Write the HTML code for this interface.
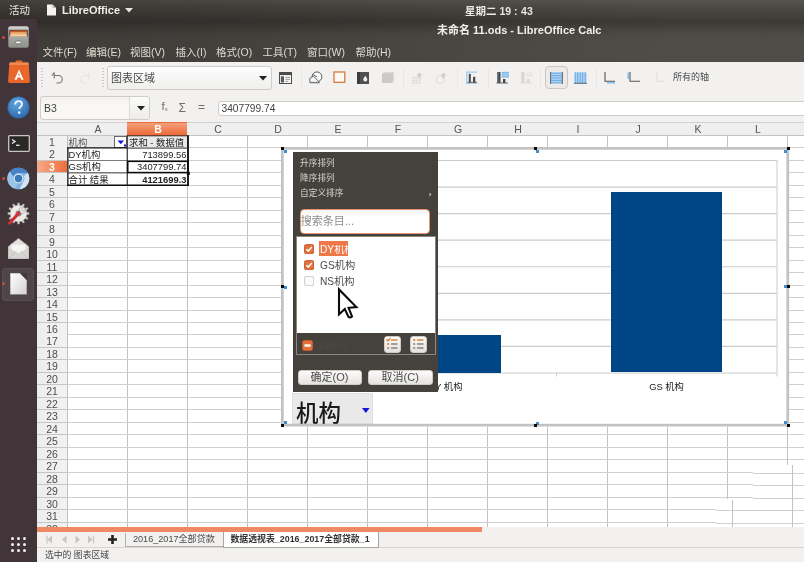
<!DOCTYPE html><html><head><meta charset="utf-8"><title>LibreOffice Calc</title><style>
*{box-sizing:border-box;margin:0;padding:0}
html,body{width:804px;height:562px;overflow:hidden;background:#fff}
body{position:relative;font-family:"Liberation Sans","Noto Sans CJK SC",sans-serif;font-size:10px;color:#333}
#w{position:absolute;left:0;top:0;width:804px;height:562px;overflow:hidden;filter:blur(0.45px)}
.abs{position:absolute}
.t{position:absolute;white-space:nowrap;line-height:1}
#topbar{left:0;top:0;width:804px;height:62px;background:linear-gradient(90deg,rgba(0,0,0,.22) 0,rgba(0,0,0,.17) 25%,rgba(0,0,0,.08) 55%,rgba(0,0,0,0) 85%),linear-gradient(#58544f 0,#4c4843 8px,#433f3b 16px,#3c3834 22px,#45423d 28px,#4e4b46 35px,#504d48 42px,#504d48 62px)}
#dock{left:0;top:19px;width:37px;height:543px;background:#42353a}
#title{display:none}
#menubar{display:none}
#toolbar{left:37px;top:62px;width:767px;height:32px;background:#f2f1f0}
#fbar{left:37px;top:94px;width:767px;height:29px;background:#f2f1f0}
.menu{color:#dfdbd2;font-size:10.5px;top:47px}
.sep{position:absolute;width:1px;background:#eae8e5;top:68px;height:20px}
#sheet{left:37px;top:122px;width:767px;height:405px;background:#fff;overflow:hidden}
.ch{position:absolute;top:0;height:14px;border-top:1px solid #d2d2d2;background:#efefef;border-right:1px solid #c4c4c4;border-bottom:1px solid #c4c4c4;text-align:center;font-size:10.5px;line-height:12px;color:#555;padding-left:2px}
.rh{position:absolute;left:0;width:31px;height:12.5px;background:linear-gradient(90deg,#eeeded,#f3f2f2);border-right:1px solid #c0c0c0;border-bottom:1px solid #c6c6c6;text-align:center;font-size:10.5px;line-height:12.5px;color:#4e4e4e}
.vl{position:absolute;top:13px;width:1px;height:392px;background:#c2c2c2}
.hl{position:absolute;left:30px;height:1px;width:737px;background:#d0d0d0}
.cell{position:absolute;font-size:9.4px;line-height:12px;white-space:nowrap;color:#222;height:12.5px}
</style></head><body><div id="w">
<div id="topbar" class="abs"></div>
<div id="title" class="abs"></div>
<div id="menubar" class="abs"></div>
<div id="dock" class="abs"></div>
<div class="t" style="left:9px;top:5px;font-size:10.5px;color:#e8e6e2">活动</div>
<svg class="abs" style="left:46px;top:4px" width="11" height="12" viewBox="0 0 11 12"><path d="M1 0.5h5.5l3.5 3.5v7.5h-9z" fill="#f4f3f1"/><path d="M6.5 0.5v3.5h3.5z" fill="#bdbbb7"/></svg>
<div class="t" style="left:62px;top:4.5px;font-size:11px;font-weight:bold;color:#eeece8">LibreOffice</div>
<svg class="abs" style="left:125px;top:8px" width="8" height="5"><path d="M0 0h8l-4 4.5z" fill="#e8e6e2"/></svg>
<div class="t" style="left:465px;top:5.5px;font-size:10.5px;color:#e8e6e2;font-weight:bold">星期二 19<span style="margin:0 3.500px 0 3px">:</span>43</div>
<div class="t" style="left:437px;top:25px;font-size:11px;font-weight:bold;color:#f0eeea">未命名 11.ods - LibreOffice Calc</div>
<div class="t menu" style="left:42.5px">文件(F)</div>
<div class="t menu" style="left:86px">编辑(E)</div>
<div class="t menu" style="left:130px">视图(V)</div>
<div class="t menu" style="left:175.5px">插入(I)</div>
<div class="t menu" style="left:216px">格式(O)</div>
<div class="t menu" style="left:262.5px">工具(T)</div>
<div class="t menu" style="left:307px">窗口(W)</div>
<div class="t menu" style="left:355.5px">帮助(H)</div>
<div id="toolbar" class="abs"></div><div id="fbar" class="abs"></div>
<div class="abs" style="left:41px;top:68px;width:2px;height:20px;background:repeating-linear-gradient(#c9c7c3 0 1px,transparent 1px 3px)"></div>
<div class="abs" style="left:102px;top:68px;width:2px;height:20px;background:repeating-linear-gradient(#c9c7c3 0 1px,transparent 1px 3px)"></div>
<svg class="abs" style="left:51px;top:70px" width="14" height="15" viewBox="0 0 14 15"><path d="M3 5.5h4.5a3.6 3.6 0 0 1 0 7.5h-2" fill="none" stroke="#74726e" stroke-width="1.1"/><path d="M3.2 2.5v6M0.8 5.5l2.4-3" fill="none" stroke="#74726e" stroke-width="1.1"/></svg>
<svg class="abs" style="left:78px;top:70px" width="14" height="15" viewBox="0 0 14 15"><path d="M11 5.5h-4.5a3.6 3.6 0 0 0 0 7.5h2M10.8 2.5v6" fill="none" stroke="#e6e4e1" stroke-width="1.1"/></svg>
<div class="abs" style="left:107px;top:66px;width:165px;height:24px;border:1px solid #cfcdc9;border-radius:3px;background:linear-gradient(#fdfdfd,#efeeec)"></div>
<div class="t" style="left:111px;top:73px;font-size:11px;color:#4a4a4a">图表区域</div>
<svg class="abs" style="left:259px;top:76px" width="8" height="5"><path d="M0 0h8l-4 4.5z" fill="#222"/></svg>
<div class="sep" style="left:300.5px"></div>
<div class="sep" style="left:403px"></div>
<div class="sep" style="left:457px"></div>
<div class="sep" style="left:487.5px"></div>
<div class="sep" style="left:539.5px"></div>
<div class="sep" style="left:595.5px"></div>
<svg class="abs" style="left:278.5px;top:71.5px" width="13" height="12" viewBox="0 0 13 12"><rect x="0.500" y="0.500" width="12" height="11" fill="#fbfbfb" stroke="#4c4c4c"/><rect x="0.500" y="0.500" width="12" height="2.600" fill="#4c4c4c"/><rect x="1.800" y="4.300" width="3.200" height="6.200" fill="#5a5a5a"/><path d="M6.300 5.300h4.700M6.300 7.300h4.700M6.300 9.300h3" stroke="#8a8a8a" stroke-width="0.900"/></svg>
<svg class="abs" style="left:308.5px;top:71.3px" width="14" height="13" viewBox="0 0 14 13"><circle cx="8" cy="5.800" r="4.900" fill="#fafafa" stroke="#5c5c5c" stroke-width="1"/><path d="M8 5.800L3.600 3.400" stroke="#5c5c5c" stroke-width="0.900"/><path d="M0.800 7.200l3.800-2 5.800 6.200h-9.600z" fill="#f6f6f6" stroke="#5c5c5c" stroke-width="0.900"/><path d="M1 11.800h9.500" stroke="#777" stroke-width="0.900"/></svg>
<svg class="abs" style="left:333px;top:71px" width="13" height="12.5" viewBox="0 0 13 12.5"><rect x="1" y="1" width="10.800" height="10.300" fill="#fdf8f4" stroke="#d47a3c" stroke-width="1.300"/></svg>
<svg class="abs" style="left:357.3px;top:71.5px" width="12" height="12" viewBox="0 0 12 12"><rect x="0" y="0" width="12" height="12" fill="#505050"/><rect x="0" y="0" width="3" height="12" fill="#3c3c3c"/><path d="M8.300 3.800c1.300 1.800 2 2.700 2 3.800a2 2 0 0 1-4 0c0-1.100 0.700-2 2-3.800z" fill="#f4f4f4"/></svg>
<svg class="abs" style="left:382px;top:72px" width="12" height="11" viewBox="0 0 12 11"><rect x="1.500" y="0" width="10.500" height="9.500" rx="1" fill="#d9d8d6"/><rect x="0" y="1.200" width="10.800" height="9.800" rx="1" fill="#cbcac8"/></svg>
<svg class="abs" style="left:410.5px;top:71px" width="13" height="13" viewBox="0 0 13 13"><path d="M1.500 6.500h7.500v5.500h-7.500zM5.200 6.500v5.500M1.500 9.200h7.500" fill="none" stroke="#dddbd8"/><path d="M8.500 1.500l3 3.200h-2v2.500h-2v-2.500h-2z" fill="#cfcdca"/></svg>
<svg class="abs" style="left:434.5px;top:71px" width="13" height="13" viewBox="0 0 13 13"><path d="M1.500 6.500l3.800-2 3.800 2v4.500l-3.800 2-3.800-2z" fill="none" stroke="#e0deda"/><path d="M8.500 1.500l3 3.200h-2v2.500h-2v-2.500h-2z" fill="#d0cecb"/></svg>
<svg class="abs" style="left:464.5px;top:71px" width="14" height="14" viewBox="0 0 14 14"><path d="M1 1.200h11M1 12.300h11" stroke="#a4cdf0" stroke-width="1.300"/><path d="M1.800 1v11" stroke="#a4cdf0" stroke-width="1.500"/><rect x="3.800" y="2.800" width="2" height="8.800" fill="#4a4a4a"/><rect x="8" y="5.800" width="2.300" height="5.800" fill="#4a4a4a"/><path d="M2.500 11.300h9.500" stroke="#555" stroke-width="0.900"/></svg>
<svg class="abs" style="left:495.5px;top:71px" width="14" height="13" viewBox="0 0 14 13"><rect x="1.300" y="1" width="3.200" height="11" fill="#454545"/><rect x="1.300" y="1" width="1.300" height="11" fill="#6a7680"/><rect x="7" y="8" width="2.400" height="4" fill="#454545"/><path d="M0.500 12h11.500" stroke="#555" stroke-width="0.900"/><rect x="6.300" y="1.300" width="6" height="4.800" fill="#9ccbf0" stroke="#78b4ea" stroke-width="0.900"/></svg>
<svg class="abs" style="left:520px;top:71px" width="13" height="13" viewBox="0 0 13 13"><rect x="1.300" y="1" width="3.200" height="11" fill="#d8d7d4"/><rect x="7" y="8" width="2.400" height="4" fill="#d8d7d4"/><path d="M0.500 12h11.500" stroke="#dcdbd8"/><rect x="6.300" y="1.300" width="6" height="4.800" fill="#e9e8e6"/></svg>
<div class="abs" style="left:544.500px;top:65.500px;width:23px;height:23px;border:1px solid #cbc8c3;border-radius:4px;background:#edebe8"></div>
<svg class="abs" style="left:549.5px;top:71.5px" width="13" height="12" viewBox="0 0 13 12"><rect x="0.500" y="0.300" width="12" height="11.200" fill="#aed3f3"/><path d="M0.500 1.200h12M0.500 3.600h12M0.500 6h12M0.500 8.400h12M0.500 10.800h12" stroke="#62a4e4" stroke-width="0.900"/><path d="M0.600 0v12M12.400 0v12" stroke="#5a5a5a" stroke-width="0.900"/></svg>
<svg class="abs" style="left:574px;top:71.5px" width="13" height="12" viewBox="0 0 13 12"><rect x="0.500" y="0.300" width="12" height="11" fill="#aed3f3"/><path d="M1.200 0.300v11M3.700 0.300v11M6.200 0.300v11M8.700 0.300v11M11.200 0.300v11" stroke="#62a4e4" stroke-width="0.900"/><path d="M0 11.300h13" stroke="#5a5a5a" stroke-width="0.900"/></svg>
<svg class="abs" style="left:604px;top:71.5px" width="12" height="12" viewBox="0 0 12 12"><path d="M1 0v9.300h10" fill="none" stroke="#555" stroke-width="1.100"/><path d="M3 10.800h8" stroke="#86bdee" stroke-width="1.500"/></svg>
<svg class="abs" style="left:627px;top:71.5px" width="13" height="12" viewBox="0 0 13 12"><path d="M3 0v9.300h10" fill="none" stroke="#555" stroke-width="1.100"/><path d="M1.300 0.500v6.500" stroke="#86bdee" stroke-width="1.700"/></svg>
<svg class="abs" style="left:654px;top:71.5px" width="11" height="12" viewBox="0 0 11 12"><path d="M3 0v9.300h8" fill="none" stroke="#e0deda" stroke-width="1.100"/></svg>
<div class="t" style="left:673px;top:72.500px;font-size:9px;color:#4a4a4a">所有的轴</div>
<div class="abs" style="left:39.5px;top:96px;width:110px;height:24px;border:1px solid #cfcdc9;border-radius:3px;background:linear-gradient(#f1f0ee,#f9f8f7 40%)"></div>
<div class="abs" style="left:129px;top:97px;width:20px;height:22px;border-left:1px solid #dcdad7;border-radius:0 3px 3px 0;background:linear-gradient(#fbfbfa,#eeedeb)"></div>
<div class="t" style="left:44px;top:103px;font-size:10.500px;color:#444">B3</div>
<svg class="abs" style="left:136.5px;top:106px" width="8" height="5"><path d="M0 0h8l-4 4.500z" fill="#222"/></svg>
<div class="t" style="left:161.500px;top:101px;font-size:11.5px;color:#6e6e6e">f<span style="font-size:6px;vertical-align:-1px">x</span></div>
<div class="t" style="left:178.500px;top:101.500px;font-size:12px;color:#6e6e6e">Σ</div>
<div class="t" style="left:198px;top:101px;font-size:12px;color:#6e6e6e">=</div>
<div class="abs" style="left:218px;top:100.500px;width:590px;height:15px;border:1px solid #cfcdc9;border-radius:3px 0 0 3px;background:#fff"></div>
<div class="t" style="left:221.500px;top:103.500px;font-size:10.200px;color:#444">3407799.74</div>
<div id="sheet" class="abs">
<div class="ch" style="left:0;width:31px"></div>
<div class="ch" style="left:30.0px;width:61px">A</div>
<div class="ch" style="left:90.0px;width:61px;background:linear-gradient(#f4a07b,#ec6a37);color:#fff;font-weight:bold;border-color:#ec6a37">B</div>
<div class="ch" style="left:150.0px;width:61px">C</div>
<div class="ch" style="left:210.0px;width:61px">D</div>
<div class="ch" style="left:270.0px;width:61px">E</div>
<div class="ch" style="left:330.0px;width:61px">F</div>
<div class="ch" style="left:390.0px;width:61px">G</div>
<div class="ch" style="left:450.0px;width:61px">H</div>
<div class="ch" style="left:510.0px;width:61px">I</div>
<div class="ch" style="left:570.0px;width:61px">J</div>
<div class="ch" style="left:630.0px;width:61px">K</div>
<div class="ch" style="left:690.0px;width:61px">L</div>
<div class="ch" style="left:750.0px;width:61px">M</div>
<div class="rh" style="top:14.00px">1</div>
<div class="rh" style="top:26.47px">2</div>
<div class="rh" style="top:38.94px;background:linear-gradient(90deg,#f6aa86,#ee6e3c);color:#fff;font-weight:bold">3</div>
<div class="rh" style="top:51.40px">4</div>
<div class="rh" style="top:63.87px">5</div>
<div class="rh" style="top:76.34px">6</div>
<div class="rh" style="top:88.81px">7</div>
<div class="rh" style="top:101.28px">8</div>
<div class="rh" style="top:113.74px">9</div>
<div class="rh" style="top:126.21px">10</div>
<div class="rh" style="top:138.68px">11</div>
<div class="rh" style="top:151.15px">12</div>
<div class="rh" style="top:163.62px">13</div>
<div class="rh" style="top:176.08px">14</div>
<div class="rh" style="top:188.55px">15</div>
<div class="rh" style="top:201.02px">16</div>
<div class="rh" style="top:213.49px">17</div>
<div class="rh" style="top:225.96px">18</div>
<div class="rh" style="top:238.42px">19</div>
<div class="rh" style="top:250.89px">20</div>
<div class="rh" style="top:263.36px">21</div>
<div class="rh" style="top:275.83px">22</div>
<div class="rh" style="top:288.30px">23</div>
<div class="rh" style="top:300.76px">24</div>
<div class="rh" style="top:313.23px">25</div>
<div class="rh" style="top:325.70px">26</div>
<div class="rh" style="top:338.17px">27</div>
<div class="rh" style="top:350.64px">28</div>
<div class="rh" style="top:363.10px">29</div>
<div class="rh" style="top:375.57px">30</div>
<div class="rh" style="top:388.04px">31</div>
<div class="rh" style="top:400.51px">32</div>
<div class="rh" style="top:412.98px">33</div>
<div class="vl" style="left:90px"></div>
<div class="vl" style="left:150px"></div>
<div class="vl" style="left:210px"></div>
<div class="vl" style="left:270px"></div>
<div class="vl" style="left:330px"></div>
<div class="vl" style="left:390px"></div>
<div class="vl" style="left:450px"></div>
<div class="vl" style="left:510px"></div>
<div class="vl" style="left:570px"></div>
<div class="vl" style="left:630px"></div>
<div class="vl" style="left:690px"></div>
<div class="vl" style="left:750px"></div>
<div class="hl" style="top:25.47px"></div>
<div class="hl" style="top:37.94px"></div>
<div class="hl" style="top:50.40px"></div>
<div class="hl" style="top:62.87px"></div>
<div class="hl" style="top:75.34px"></div>
<div class="hl" style="top:87.81px"></div>
<div class="hl" style="top:100.28px"></div>
<div class="hl" style="top:112.74px"></div>
<div class="hl" style="top:125.21px"></div>
<div class="hl" style="top:137.68px"></div>
<div class="hl" style="top:150.15px"></div>
<div class="hl" style="top:162.62px"></div>
<div class="hl" style="top:175.08px"></div>
<div class="hl" style="top:187.55px"></div>
<div class="hl" style="top:200.02px"></div>
<div class="hl" style="top:212.49px"></div>
<div class="hl" style="top:224.96px"></div>
<div class="hl" style="top:237.42px"></div>
<div class="hl" style="top:249.89px"></div>
<div class="hl" style="top:262.36px"></div>
<div class="hl" style="top:274.83px"></div>
<div class="hl" style="top:287.30px"></div>
<div class="hl" style="top:299.76px"></div>
<div class="hl" style="top:312.23px"></div>
<div class="hl" style="top:324.70px"></div>
<div class="hl" style="top:337.17px"></div>
<div class="hl" style="top:349.64px"></div>
<div class="hl" style="top:362.10px"></div>
<div class="hl" style="top:374.57px"></div>
<div class="hl" style="top:387.04px"></div>
<div class="hl" style="top:399.51px"></div>
<div class="hl" style="top:411.98px"></div>
</div>
<div class="abs" style="left:67.5px;top:136px;width:59.5px;height:12px;background:#e9e9e9"></div>
<div class="abs" style="left:127.500px;top:136px;width:59.500px;height:12px;background:#e9e9e9"></div>
<div class="cell" style="left:68.5px;top:136.5px;width:45px;text-align:left;color:#555">机构</div>
<div class="abs" style="left:113.500px;top:136px;width:13.500px;height:11.500px;background:#fff;border:1px solid #6a6a6a"></div>
<svg class="abs" style="left:116.5px;top:139.5px" width="10" height="8" viewBox="0 0 10 8"><path d="M0.500 0.500h6.500l-3.250 3.800z" fill="#1515d8"/><rect x="7" y="4.500" width="2" height="2" fill="#1515d8"/></svg>
<div class="cell" style="left:129px;top:136.5px;width:58px;text-align:left;">求和 - 数据值</div>
<div class="cell" style="left:68.5px;top:148.5px;width:58px;text-align:left;">DY机构</div>
<div class="cell" style="left:68.5px;top:161px;width:58px;text-align:left;">GS机构</div>
<div class="cell" style="left:68.5px;top:173.5px;width:58px;text-align:left;">合计 结果</div>
<div class="cell" style="left:127px;top:148.5px;width:59.5px;text-align:right;">713899.56</div>
<div class="cell" style="left:127px;top:161px;width:59.5px;text-align:right;">3407799.74</div>
<div class="cell" style="left:127px;top:173.5px;width:59.5px;text-align:right;font-weight:bold">4121699.3</div>
<svg class="abs" style="left:60px;top:130px" width="135" height="60" viewBox="60 130 135 60"><path d="M67.9 147.2L67.9 186" stroke="#0c0c0c" stroke-width="1.2"/><path d="M67.3 185.3L189 185.3" stroke="#0c0c0c" stroke-width="1.5"/><path d="M188 135.2L188 186.1" stroke="#0c0c0c" stroke-width="1.8"/><path d="M67.3 147.9L127 147.9" stroke="#0c0c0c" stroke-width="1.2"/><path d="M127 148.1L188 148.1" stroke="#333" stroke-width="1"/><path d="M127 135.8L189 135.8" stroke="#333" stroke-width="1"/><path d="M127.2 135.3L127.2 186" stroke="#1a1a1a" stroke-width="1"/><path d="M68 160.5L127 160.5" stroke="#666" stroke-width="0.8"/><path d="M68 172.9L127 172.9" stroke="#333" stroke-width="0.9"/><rect x="127.700" y="161.300" width="60.200" height="11.300" fill="none" stroke="#0a0a0a" stroke-width="1.600"/><rect x="186.800" y="171.800" width="3" height="3.200" fill="#0a0a0a"/></svg>
<div class="abs" style="left:753px;top:464.500px;width:51px;height:35px;background:#fff"></div>
<div class="abs" style="left:716px;top:499px;width:88px;height:28px;background:#fff"></div>
<div class="abs" style="left:753px;top:472.6px;width:51px;height:1px;background:#d0d0d0"></div>
<div class="abs" style="left:753px;top:485.1px;width:51px;height:1px;background:#d0d0d0"></div>
<div class="abs" style="left:753px;top:497.6px;width:51px;height:1px;background:#d0d0d0"></div>
<div class="abs" style="left:716px;top:510.1px;width:88px;height:1px;background:#d0d0d0"></div>
<div class="abs" style="left:716px;top:522.6px;width:88px;height:1px;background:#d0d0d0"></div>
<div class="abs" style="left:792px;top:465px;width:1px;height:62px;background:#c2c2c2"></div>
<div class="abs" style="left:732px;top:500px;width:1px;height:27px;background:#c2c2c2"></div>
<div class="abs" style="left:37px;top:526.5px;width:767px;height:36px;background:#f2f1f0"></div>
<div class="abs" style="left:37px;top:526.800px;width:444.5px;height:5.200px;background:#ed8a63"></div>
<div class="abs" style="left:37px;top:546.5px;width:767px;height:1px;background:#d9d6d2"></div>
<svg class="abs" style="left:45px;top:535px" width="52" height="9" viewBox="0 0 52 9"><path d="M2 0.500v8" stroke="#c8c6c2" stroke-width="1.200"/><path d="M7 0.500v8l-4.500-4z" fill="#c8c6c2"/><path d="M21.500 0.500v8l-4.500-4z" fill="#c8c6c2"/><path d="M30.500 0.500v8l4.500-4z" fill="#c8c6c2"/><path d="M43 0.500v8l4.500-4z" fill="#c8c6c2"/><path d="M48.500 0.500v8" stroke="#c8c6c2" stroke-width="1.200"/></svg>
<svg class="abs" style="left:107.5px;top:535px" width="9" height="9" viewBox="0 0 9 9"><path d="M4.500 0v9M0 4.500h9" stroke="#222" stroke-width="2.600"/></svg>
<div class="abs" style="left:124.5px;top:532.5px;width:99px;height:14px;border:1px solid #b3b0ab;border-top:none;background:#f2f1f0"></div>
<div class="t" style="left:133px;top:535px;font-size:9.100px;color:#4a4a4a">2016_2017全部贷款</div>
<div class="abs" style="left:223px;top:532px;width:155.5px;height:15.500px;border:1px solid #a9a6a1;border-top:none;background:#fff"></div>
<div class="t" style="left:230.500px;top:535px;font-size:8.900px;font-weight:bold;color:#333">数据透视表_2016_2017全部贷款_1</div>
<div class="t" style="left:45px;top:551px;font-size:8.800px;color:#444">选中的 图表区域</div>
<div class="abs" style="left:281px;top:147px;width:508px;height:279.500px;background:#fff"></div>
<svg class="abs" style="left:280px;top:146px;z-index:2" width="511" height="282" viewBox="280 146 511 282"><rect x="282.350" y="148.350" width="505.400" height="276.800" fill="none" stroke="#c2c2c2" stroke-width="2.700"/></svg>
<svg class="abs" style="left:330px;top:155px" width="452" height="226" viewBox="330 155 452 226"><path d="M335 160.50H777" stroke="#cccccc" stroke-width="1.200"/><path d="M335 187.06H777" stroke="#cccccc" stroke-width="1.200"/><path d="M335 213.62H777" stroke="#cccccc" stroke-width="1.200"/><path d="M335 240.18H777" stroke="#cccccc" stroke-width="1.200"/><path d="M335 266.74H777" stroke="#cccccc" stroke-width="1.200"/><path d="M335 293.30H777" stroke="#cccccc" stroke-width="1.200"/><path d="M335 319.86H777" stroke="#cccccc" stroke-width="1.200"/><path d="M335 346.42H777" stroke="#cccccc" stroke-width="1.200"/><path d="M335 372.98H777" stroke="#cccccc" stroke-width="1.200"/><path d="M777 160v213M335.500 160v213" stroke="#cccccc" stroke-width="1"/><path d="M335.5 373v3.500" stroke="#cccccc" stroke-width="1"/><path d="M556.5 373v3.500" stroke="#cccccc" stroke-width="1"/><path d="M777 373v3.500" stroke="#cccccc" stroke-width="1"/></svg>
<div class="abs" style="left:390px;top:335px;width:110.700px;height:37.500px;background:#004586"></div>
<div class="abs" style="left:611px;top:191.700px;width:110.500px;height:180.800px;background:#004586"></div>
<div class="t" style="left:426px;top:383px;font-size:9.300px;color:#1a1a1a;width:39px;text-align:center">DY 机构</div>
<div class="t" style="left:647px;top:383px;font-size:9.300px;color:#1a1a1a;width:39px;text-align:center">GS 机构</div>
<div class="abs" style="left:292px;top:392.500px;width:81px;height:31.500px;background:#e9e9e9;border:1px solid #e0e0e0"></div>
<div class="t" style="left:296px;top:403.800px;font-size:22.500px;font-weight:500;color:#1a1a1a;transform:scaleY(1.05)">机构</div>
<svg class="abs" style="left:361.800px;top:408px" width="8" height="6"><path d="M0 0h7.600l-3.800 5z" fill="#1414dc"/></svg>
<div class="abs" style="left:284px;top:150px;width:3px;height:3px;background:#3f8fd0;z-index:3"></div>
<div class="abs" style="left:281px;top:147px;width:3px;height:3px;background:#080808;z-index:3"></div>
<div class="abs" style="left:535.5px;top:149.5px;width:3px;height:3px;background:#3f8fd0;z-index:3"></div>
<div class="abs" style="left:534px;top:147px;width:3px;height:3px;background:#080808;z-index:3"></div>
<div class="abs" style="left:784px;top:150px;width:3px;height:3px;background:#3f8fd0;z-index:3"></div>
<div class="abs" style="left:786.5px;top:147px;width:3px;height:3px;background:#080808;z-index:3"></div>
<div class="abs" style="left:284px;top:285.5px;width:3px;height:3px;background:#3f8fd0;z-index:3"></div>
<div class="abs" style="left:281px;top:285px;width:3px;height:3px;background:#080808;z-index:3"></div>
<div class="abs" style="left:784px;top:285px;width:3px;height:3px;background:#3f8fd0;z-index:3"></div>
<div class="abs" style="left:786.5px;top:284.5px;width:3px;height:3px;background:#080808;z-index:3"></div>
<div class="abs" style="left:284px;top:421px;width:3px;height:3px;background:#3f8fd0;z-index:3"></div>
<div class="abs" style="left:281px;top:424px;width:3px;height:3px;background:#080808;z-index:3"></div>
<div class="abs" style="left:535.5px;top:421.5px;width:3px;height:3px;background:#3f8fd0;z-index:3"></div>
<div class="abs" style="left:534px;top:424px;width:3px;height:3px;background:#080808;z-index:3"></div>
<div class="abs" style="left:784px;top:421px;width:3px;height:3px;background:#3f8fd0;z-index:3"></div>
<div class="abs" style="left:786.5px;top:424px;width:3px;height:3px;background:#080808;z-index:3"></div>
<div class="abs" style="left:293px;top:152px;width:145px;height:240px;background:#45423d"></div>
<div class="t" style="left:300px;top:158.5px;font-size:8.700px;color:#d6d3cc">升序排列</div>
<div class="t" style="left:300px;top:173.5px;font-size:8.700px;color:#d6d3cc">降序排列</div>
<div class="t" style="left:300px;top:188.5px;font-size:8.700px;color:#d6d3cc">自定义排序</div>
<svg class="abs" style="left:428.500px;top:191.500px" width="4" height="5"><path d="M0.500 0.500l2 2-2 2z" fill="#c4c1bb"/></svg>
<div class="abs" style="left:299.500px;top:208.700px;width:130.500px;height:25px;border:1.500px solid #e9926c;border-radius:4px;background:linear-gradient(#f3f3f3,#fff 30%)"></div>
<div class="t" style="left:300.800px;top:215.700px;font-size:11px;color:#8e8e8e">搜索条目...</div>
<div class="abs" style="left:296px;top:236.300px;width:139.500px;height:119.200px;border:1px solid #8a877f;background:#45423d"></div>
<div class="abs" style="left:297px;top:237px;width:137.500px;height:96px;background:#fff"></div>
<svg class="abs" style="left:304px;top:243.8px" width="10.200" height="10.200" viewBox="0 0 11 11"><rect x="0.500" y="0.500" width="10" height="10" rx="2" fill="#e2703d" stroke="#c55a2b"/><path d="M2.600 5.600l2 2.100 3.800-4.400" fill="none" stroke="#fff" stroke-width="1.700"/></svg>
<svg class="abs" style="left:304px;top:260.3px" width="10.200" height="10.200" viewBox="0 0 11 11"><rect x="0.500" y="0.500" width="10" height="10" rx="2" fill="#e2703d" stroke="#c55a2b"/><path d="M2.600 5.600l2 2.100 3.800-4.400" fill="none" stroke="#fff" stroke-width="1.700"/></svg>
<svg class="abs" style="left:304px;top:276.2px" width="10.200" height="10.200" viewBox="0 0 11 11"><rect x="0.500" y="0.500" width="10" height="10" rx="2" fill="#fbfbfb" stroke="#c9c6c1"/></svg>
<div class="abs" style="left:319px;top:241.200px;width:29px;height:14.800px;background:#ee7848"></div>
<div class="t" style="left:320px;top:245px;font-size:10.200px;color:#fff;width:28.5px;overflow:hidden">DY机构</div>
<div class="t" style="left:320px;top:261px;font-size:10.200px;color:#4c4c4c">GS机构</div>
<div class="t" style="left:320px;top:277px;font-size:10.200px;color:#4c4c4c">NS机构</div>
<svg class="abs" style="left:336.300px;top:286.300px" width="24" height="34" viewBox="-3 -3.400 24 34"><path d="M0 0V25L5.800 19.600L9.400 27.400Q11.200 28.700 13 27L9.600 18.400L17.400 17.700Z" fill="#fff" stroke="#0c0c0c" stroke-width="2.100" stroke-linejoin="miter" stroke-miterlimit="6"/></svg>
<svg class="abs" style="left:301.500px;top:339.500px" width="11" height="11" viewBox="0 0 11 11"><rect x="0.500" y="0.500" width="10" height="10" rx="2" fill="#e2703d" stroke="#c55a2b"/><rect x="2.500" y="4.300" width="6" height="2.400" fill="#fff"/></svg>
<div class="t" style="left:317px;top:341px;font-size:9px;color:#4d4a44">全部(A)</div>
<div class="abs" style="left:383.7px;top:335.700px;width:17px;height:17px;border-radius:3px;background:linear-gradient(#fafaf9,#e4e2de);border:1px solid #cfccc6"></div>
<svg class="abs" style="left:383.7px;top:335.700px" width="17" height="17" viewBox="0 0 17 17"><rect x="7" y="3.2" width="6.500" height="1.600" fill="#e08a4a"/><rect x="3.200" y="3" width="2" height="2" fill="#e08a4a"/><rect x="7" y="7.2" width="6.500" height="1.600" fill="#8a8a8a"/><rect x="3.200" y="7" width="2" height="2" fill="#e08a4a"/><rect x="7" y="11.2" width="6.500" height="1.600" fill="#8a8a8a"/><rect x="3.200" y="11" width="2" height="2" fill="#e08a4a"/><path d="M2.500 3.500l1.500 1.500 2.500-3" stroke="#e08a4a" fill="none" stroke-width="1.200"/></svg>
<div class="abs" style="left:410px;top:335.700px;width:17px;height:17px;border-radius:3px;background:linear-gradient(#fafaf9,#e4e2de);border:1px solid #cfccc6"></div>
<svg class="abs" style="left:410px;top:335.700px" width="17" height="17" viewBox="0 0 17 17"><rect x="7" y="3.2" width="6.500" height="1.600" fill="#e08a4a"/><rect x="3.200" y="3" width="2" height="2" fill="#e08a4a"/><rect x="7" y="7.2" width="6.500" height="1.600" fill="#8a8a8a"/><rect x="3.200" y="7" width="2" height="2" fill="#9a9a9a"/><rect x="7" y="11.2" width="6.500" height="1.600" fill="#8a8a8a"/><rect x="3.200" y="11" width="2" height="2" fill="#9a9a9a"/></svg>
<div class="abs" style="left:297.5px;top:369.500px;width:64px;height:15px;border-radius:3px;background:linear-gradient(#fbfbfa,#e6e4e0);border:1px solid #cfccc6;text-align:center;font-size:11px;line-height:13px;color:#4c4c4c">确定(O)</div>
<div class="abs" style="left:368px;top:369.500px;width:64.5px;height:15px;border-radius:3px;background:linear-gradient(#fbfbfa,#e6e4e0);border:1px solid #cfccc6;text-align:center;font-size:11px;line-height:13px;color:#4c4c4c">取消(C)</div>
<div class="abs" style="left:1.500px;top:267.500px;width:32.500px;height:33px;border-radius:3px;background:#50454a;border:1px solid #584d52"></div>
<div class="abs" style="left:1.500px;top:35.5px;width:3px;height:3px;border-radius:50%;background:#c94e36"></div>
<div class="abs" style="left:1.500px;top:176.5px;width:3px;height:3px;border-radius:50%;background:#c94e36"></div>
<div class="abs" style="left:1.500px;top:281.5px;width:3px;height:3px;border-radius:50%;background:#c94e36"></div>
<svg class="abs" style="left:8px;top:25.5px" width="21" height="22" viewBox="0 0 21 22"><defs><linearGradient id="fg" x1="0" y1="0" x2="0" y2="1"><stop offset="0" stop-color="#d2d4d1"/><stop offset="0.45" stop-color="#a9aba7"/><stop offset="1" stop-color="#8d8f8b"/></linearGradient></defs><rect x="0.300" y="0.300" width="20.400" height="21.400" rx="2" fill="url(#fg)"/><rect x="1.300" y="3.800" width="18.400" height="6.600" fill="#4d3a30"/><rect x="2.300" y="4.800" width="16.400" height="5.600" fill="#efb074"/><rect x="2.300" y="4.800" width="16.400" height="1.400" fill="#c9551f"/><rect x="2.300" y="8.600" width="16.400" height="1.800" fill="#f6d2a8"/><rect x="7.600" y="15" width="5.600" height="2.800" rx="1" fill="#f6f6f4" stroke="#666864" stroke-width="0.800"/></svg>
<svg class="abs" style="left:7.5px;top:60px" width="22" height="23" viewBox="0 0 22 23"><path d="M7.500 3v-1.200a1.300 1.300 0 0 1 1.300-1.300h4.400a1.300 1.300 0 0 1 1.300 1.300v1.200z" fill="#e9682c"/><path d="M2.500 2.500h17a1.200 1.200 0 0 1 1.200 1l1.200 17.800a1.500 1.500 0 0 1-1.500 1.600h-18.800a1.500 1.500 0 0 1-1.500-1.600l1.200-17.800a1.200 1.200 0 0 1 1.200-1z" fill="#e9672b"/><path d="M2.500 2.500h17a1.200 1.200 0 0 1 1.200 1l0.100 1.500h-19.600l0.100-1.500a1.200 1.200 0 0 1 1.200-1z" fill="#f08a55"/><path d="M11 9.500l4.600 10.200h-2.300l-0.900-2.300h-2.800l-0.900 2.300h-2.300zM11 12.800l-0.800 2.700h1.600z" fill="#fff"/></svg>
<svg class="abs" style="left:7px;top:96px" width="23" height="23" viewBox="0 0 23 23"><defs><radialGradient id="hg" cx="0.42" cy="0.3" r="0.8"><stop offset="0" stop-color="#62a6e0"/><stop offset="1" stop-color="#2763aa"/></radialGradient></defs><circle cx="11.500" cy="11.500" r="10.800" fill="url(#hg)" stroke="#2a5f9e" stroke-width="0.600"/><path d="M8.200 8.400c0-2.100 1.500-3.300 3.400-3.300 2 0 3.400 1.200 3.400 3 0 2.500-2.800 2.700-2.800 5" fill="none" stroke="#eef4fa" stroke-width="1.900"/><circle cx="12.200" cy="16.600" r="1.300" fill="#eef4fa"/></svg>
<svg class="abs" style="left:7.5px;top:134.5px" width="22" height="17" viewBox="0 0 22 17"><rect x="0.700" y="0.700" width="20.600" height="15.600" rx="0.800" fill="#2a2727" stroke="#c9c4c0" stroke-width="1.300"/><path d="M4 4.500l3 2-3 2" fill="none" stroke="#f4f4f4" stroke-width="1.300"/><path d="M8 10.300h3.600" stroke="#f4f4f4" stroke-width="1.200"/></svg>
<svg class="abs" style="left:7px;top:166.5px" width="23" height="23" viewBox="0 0 23 23"><circle cx="11.500" cy="11.500" r="10.800" fill="#7fb0e0"/><path d="M11.500 0.700a10.800 10.800 0 0 1 9.400 5.400h-9.400a5.400 5.400 0 0 0-5.100 3.500l-3.800-5a10.800 10.800 0 0 1 8.900-3.900z" fill="#4682c4"/><path d="M20.900 6.100a10.800 10.800 0 0 1-8.400 16.100l4.100-7.900a5.400 5.400 0 0 0 0.300-5.200z" fill="#d2e4f4"/><path d="M2.600 4.600l3.800 5a5.400 5.400 0 0 0 4.400 7.200l-2.900 4.900a10.800 10.800 0 0 1-5.300-17.100z" fill="#9cc4e8"/><circle cx="11.500" cy="11.500" r="5" fill="#d6e6f4"/><circle cx="11.500" cy="11.500" r="3.700" fill="#3b78bc"/></svg>
<svg class="abs" style="left:7px;top:201.5px" width="23" height="23" viewBox="0 0 23 23"><path d="M22.06 10.60 L22.06 12.40 L19.86 12.27 L19.13 15.02 L21.10 16.00 L20.20 17.56 L18.36 16.35 L16.35 18.36 L17.56 20.20 L16.00 21.10 L15.02 19.13 L12.27 19.86 L12.40 22.06 L10.60 22.06 L10.73 19.86 L7.98 19.13 L7.00 21.10 L5.44 20.20 L6.65 18.36 L4.64 16.35 L2.80 17.56 L1.90 16.00 L3.87 15.02 L3.14 12.27 L0.94 12.40 L0.94 10.60 L3.14 10.73 L3.87 7.98 L1.90 7.00 L2.80 5.44 L4.64 6.65 L6.65 4.64 L5.44 2.80 L7.00 1.90 L7.98 3.87 L10.73 3.14 L10.60 0.94 L12.40 0.94 L12.27 3.14 L15.02 3.87 L16.00 1.90 L17.56 2.80 L16.35 4.64 L18.36 6.65 L20.20 5.44 L21.10 7.00 L19.13 7.98 L19.86 10.73z" fill="#ecebe9" stroke="#a7a5a1" stroke-width="0.500"/><circle cx="11.500" cy="11.500" r="3" fill="#8a8884"/><path d="M2.800 21l9.500-10.500" stroke="#cf3236" stroke-width="3.200" stroke-linecap="round"/><path d="M12 7.800a3.300 3.300 0 0 1 4.800-2.400l-2.100 2.100 1.400 1.400 2.100-2.100a3.300 3.300 0 0 1-4.500 4.300z" fill="#e4e2de" stroke="#96948f" stroke-width="0.500"/></svg>
<svg class="abs" style="left:7.5px;top:237.5px" width="21" height="21" viewBox="0 0 21 21"><path d="M0.500 8.500l10-8 10 8v12h-20z" fill="#e4e3e0" stroke="#bdbbb7" stroke-width="0.800"/><path d="M3 6h15v9h-15z" fill="#f6f6f4" stroke="#cfcdc9" stroke-width="0.600"/><path d="M0.500 9l10 7 10-7v11.500h-20z" fill="#d6d5d2"/><path d="M0.500 20.500l8-7.500M20.500 20.500l-8-7.500" stroke="#bdbbb7" stroke-width="0.800"/></svg>
<svg class="abs" style="left:10px;top:272.5px" width="17" height="22" viewBox="0 0 17 22"><defs><linearGradient id="dg" x1="0" y1="0" x2="1" y2="1"><stop offset="0" stop-color="#ffffff"/><stop offset="1" stop-color="#d4d2cf"/></linearGradient></defs><path d="M9.800 0.300h6.900v7z" fill="#3f3d3a"/><path d="M0.300 0.300h9.500l6.900 7v14.400h-16.400z" fill="url(#dg)"/><path d="M0.300 21.200h16.400v0.800h-16.400z" fill="#3a3836" opacity="0.500"/></svg>
<div class="abs" style="left:10.8px;top:537.1px;width:3px;height:3px;border-radius:50%;background:#f4f2f0"></div>
<div class="abs" style="left:16.7px;top:537.1px;width:3px;height:3px;border-radius:50%;background:#f4f2f0"></div>
<div class="abs" style="left:22.5px;top:537.1px;width:3px;height:3px;border-radius:50%;background:#f4f2f0"></div>
<div class="abs" style="left:10.8px;top:542.9px;width:3px;height:3px;border-radius:50%;background:#f4f2f0"></div>
<div class="abs" style="left:16.7px;top:542.9px;width:3px;height:3px;border-radius:50%;background:#f4f2f0"></div>
<div class="abs" style="left:22.5px;top:542.9px;width:3px;height:3px;border-radius:50%;background:#f4f2f0"></div>
<div class="abs" style="left:10.8px;top:548.7px;width:3px;height:3px;border-radius:50%;background:#f4f2f0"></div>
<div class="abs" style="left:16.7px;top:548.7px;width:3px;height:3px;border-radius:50%;background:#f4f2f0"></div>
<div class="abs" style="left:22.5px;top:548.7px;width:3px;height:3px;border-radius:50%;background:#f4f2f0"></div>
</div></body></html>
